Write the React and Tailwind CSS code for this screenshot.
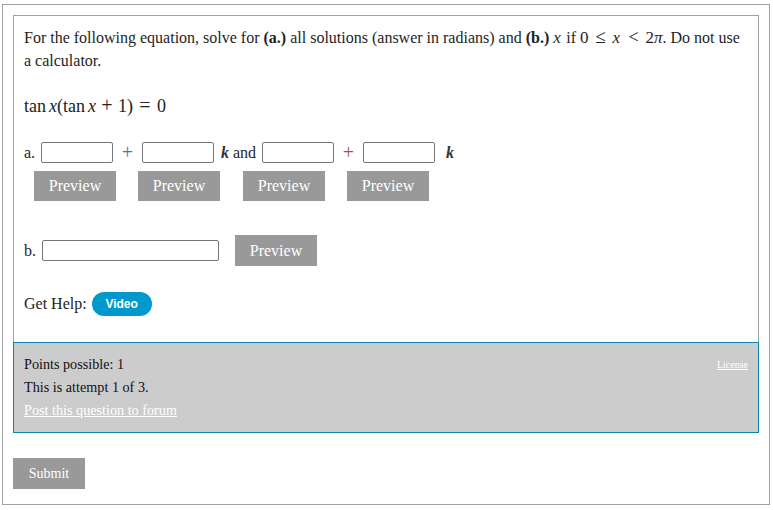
import React from "react";

const serif = { fontFamily: '"Liberation Serif", "Times New Roman", serif' };

function Inp({ w }) {
  return (
    <input
      type="text"
      className="h-[21px] border border-[#767676] rounded-[2px] bg-white outline-none"
      style={{ width: w }}
    />
  );
}

function Btn({ children, className = "" }) {
  return (
    <button
      className={"h-[30px] w-[82px] bg-[#999999] text-white text-[16px] flex items-center justify-center " + className}
      style={serif}
    >
      {children}
    </button>
  );
}

export default function App() {
  return (
    <div className="bg-white w-[773px] h-[510px] pt-[4px] pl-[2px]" style={serif}>
      <div className="w-[768px] h-[501px] border border-[#a0a0a0] px-[10px] pt-[10px] text-[#1e1e1e] text-[16px]">
        <div className="border-x border-t border-[#a0a0a0] px-[10px] pt-[10px]">
          <p className="leading-[23px]">
            For the following equation, solve for <b>(a.)</b> all solutions (answer in radians) and <b>(b.)</b>{" "}
            <span className="text-[17px]">
              <i className="inline-block w-[9px]">x</i>
            </span>{" "}
            if{" "}
            <span className="text-[17px]">
              0<span className="inline-block w-[16px] mx-[4px] text-center text-[19px] leading-none">≤</span>
              <i className="inline-block w-[9px]">x</i>
              <span className="inline-block w-[16px] mx-[4px] text-center text-[18px] leading-none">&lt;</span>2<i>π</i>
            </span>
            . Do not use a calculator.
          </p>
          <p className="mt-[22px] text-[18px] leading-[24px] text-[#222]">
            tan<i className="ml-[3px]">x</i>(tan<i className="ml-[3px]">x</i>
            <span className="inline-block w-[14px] mx-[4px] text-center text-[20px] leading-none">+</span>1)
            <span className="inline-block w-[14px] mx-[5px] text-center text-[20px] leading-none">=</span>0
          </p>
          <div className="mt-[24px] flex items-center h-[21px]">
            <span className="w-[17px]">a.</span>
            <Inp w={72} />
            <span className="w-[29px] text-center text-[#4f74a3] text-[20px] leading-[21px]">+</span>
            <Inp w={72} />
            <span className="w-[48px] pl-[7px]">
              <i className="font-bold text-[#333]">k</i> and
            </span>
            <Inp w={72} />
            <span className="w-[29px] text-center text-[#a8553f] text-[20px] leading-[21px]">+</span>
            <Inp w={72} />
            <i className="ml-[11px] font-bold text-[#333]">k</i>
          </div>
          <div className="mt-[8px] flex">
            <Btn className="ml-[10px]">Preview</Btn>
            <Btn className="ml-[22px]">Preview</Btn>
            <Btn className="ml-[23px]">Preview</Btn>
            <Btn className="ml-[22px]">Preview</Btn>
          </div>
          <div className="mt-[34px] flex items-center h-[31px]">
            <span className="w-[18px]">b.</span>
            <Inp w={177} />
            <Btn className="ml-[16px] h-[31px]">Preview</Btn>
          </div>
          <div className="mt-[26px] flex items-center h-[24px]">
            <span>Get Help:</span>
            <button
              className="ml-[5px] w-[60px] h-[24px] rounded-full bg-[#0099cc] text-white text-[12px] font-bold"
              style={{ fontFamily: '"Liberation Sans", Arial, sans-serif' }}
            >
              Video
            </button>
          </div>
          <div className="h-[26px]" />
        </div>
        <div className="border border-[#0a86ad] bg-[#cccccc] px-[10px] py-[10px] leading-[23px] text-[14.2px] text-[#111]">
          <div className="flex justify-between">
            <span>Points possible: 1</span>
            <a className="text-[10px] text-white underline leading-[23px]" href="#">License</a>
          </div>
          <div>This is attempt 1 of 3.</div>
          <a className="text-white underline" href="#">Post this question to forum</a>
        </div>
        <button
          className="mt-[25px] w-[72px] h-[31px] bg-[#999999] text-white text-[14px]"
          style={serif}
        >
          Submit
        </button>
      </div>
    </div>
  );
}
